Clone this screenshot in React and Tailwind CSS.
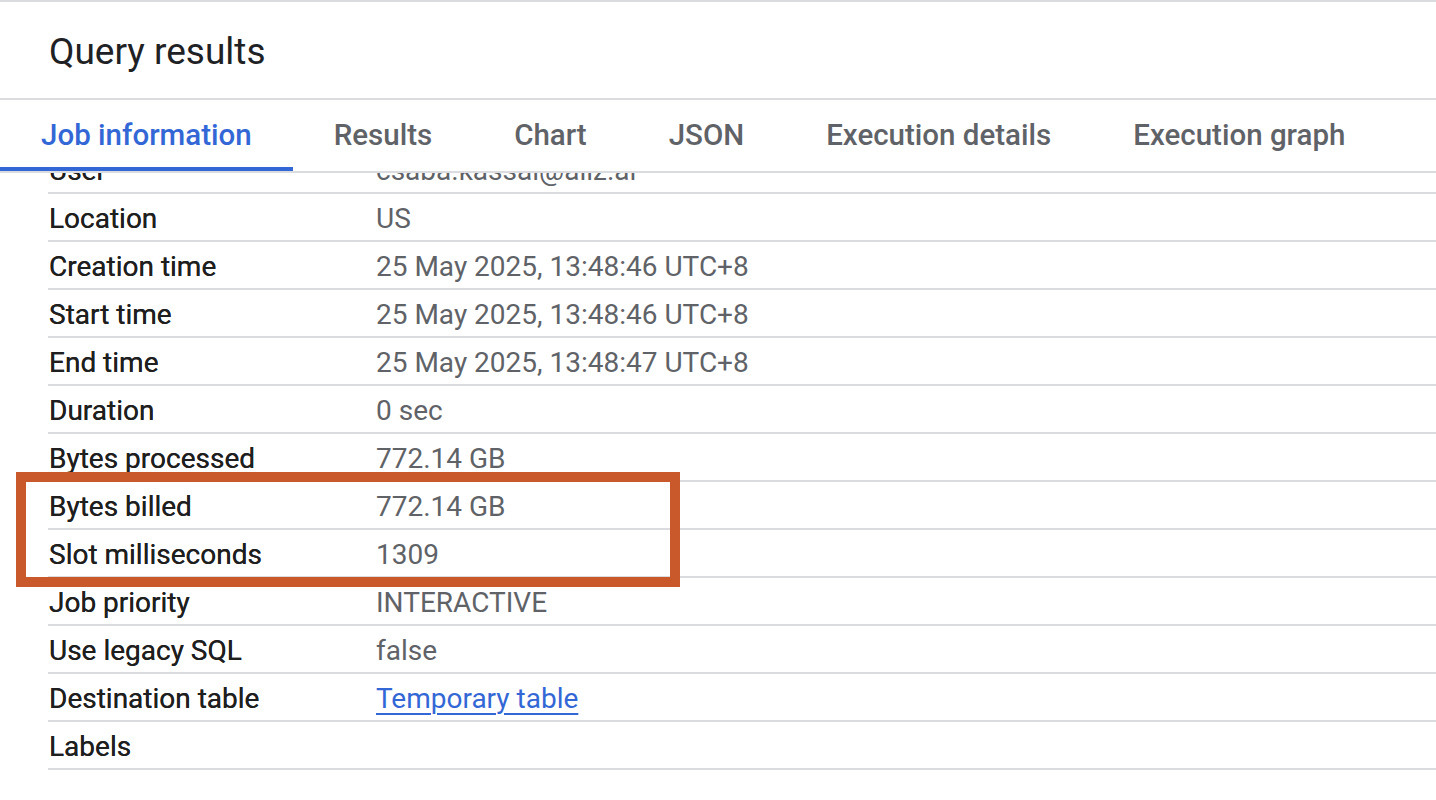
import React from "react";

const tabs = ["Job information", "Results", "Chart", "JSON", "Execution details", "Execution graph"];

const rows = [
  { label: "User", value: "csaba.kassai@aliz.ai" },
  { label: "Location", value: "US" },
  { label: "Creation time", value: "25 May 2025, 13:48:46 UTC+8" },
  { label: "Start time", value: "25 May 2025, 13:48:46 UTC+8" },
  { label: "End time", value: "25 May 2025, 13:48:47 UTC+8" },
  { label: "Duration", value: "0 sec" },
  { label: "Bytes processed", value: "772.14 GB" },
  { label: "Bytes billed", value: "772.14 GB", boxed: true },
  { label: "Slot milliseconds", value: "1309", boxed: true },
  { label: "Job priority", value: "INTERACTIVE" },
  { label: "Use legacy SQL", value: "false" },
  { label: "Destination table", value: "Temporary table", link: true },
  { label: "Labels", value: "" },
];

function Row({ row }) {
  return (
    <div className="flex items-center h-[48px] border-b-2 border-[#dadce0] pt-[3px]">
      <div className="w-[328px] pl-px text-[28px] text-[#1f1f1f] [text-shadow:0_0_0.4px_#1f1f1f] whitespace-nowrap">{row.label}</div>
      {row.link ? (
        <a className="text-[28px] text-[#3367d6] underline decoration-2 underline-offset-[5px] whitespace-nowrap">{row.value}</a>
      ) : (
        <div className="text-[28px] text-[#5f6368] whitespace-nowrap">{row.value}</div>
      )}
    </div>
  );
}

export default function App() {
  const before = rows.filter((r, i) => i < 7);
  const boxed = rows.filter((r) => r.boxed);
  const after = rows.filter((r, i) => i > 8);

  return (
    <div className="w-[1436px] h-[800px] bg-white overflow-hidden flex flex-col" style={{ fontFamily: "Roboto, 'Noto Sans', sans-serif" }}>
      <div className="h-[100px] shrink-0 border-t-2 border-b-2 border-[#dadce0] flex items-center pl-[49px] pt-[2px]">
        <h1 className="text-[37px] text-[#202124] leading-none">Query results</h1>
      </div>

      <div className="h-[73px] shrink-0 flex border-b-2 border-[#dadce0]">
        {tabs.map((t, i) => (
          <div
            key={t}
            className={`px-[41px] flex items-center text-[29.5px] font-medium pt-[4px] border-b-4 whitespace-nowrap ${
              i === 0 ? "text-[#3367d6] border-[#3367d6]" : "text-[#5f6368] border-transparent"
            }`}
          >
            {t}
          </div>
        ))}
      </div>

      <div className="flex-1 overflow-hidden">
        <div className="-mt-[27px] ml-[48px]">
          {before.map((r) => (
            <Row key={r.label} row={r} />
          ))}
          <div className="relative">
            {boxed.map((r) => (
              <Row key={r.label} row={r} />
            ))}
            <div className="absolute left-[-32px] top-[-10px] w-[664px] h-[115px] border-[10px] border-[#c9592a] pointer-events-none" />
          </div>
          {after.map((r) => (
            <Row key={r.label} row={r} />
          ))}
        </div>
      </div>
    </div>
  );
}
